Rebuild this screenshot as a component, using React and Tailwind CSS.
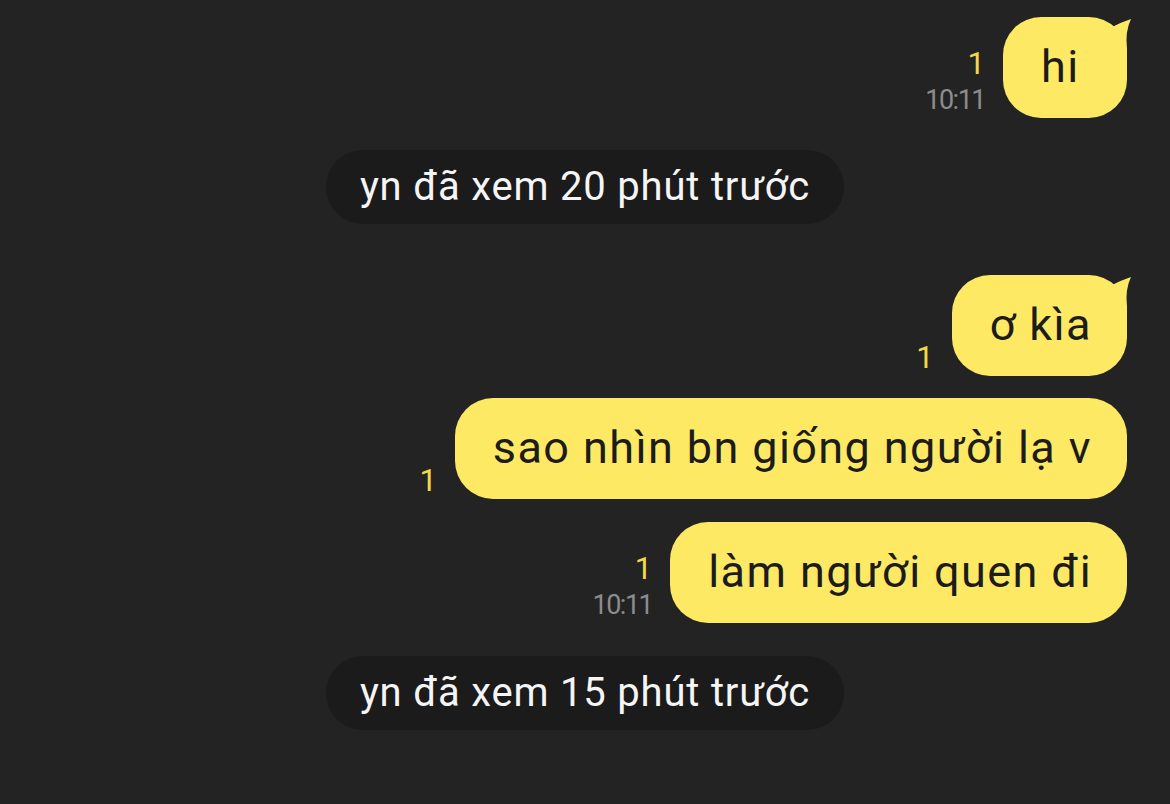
import React from 'react';

const messages = [
  { type: 'me', text: 'hi', tail: true, time: '10:11', mt: 'mt-[17px]' },
  { type: 'seen', text: 'yn đã xem 20 phút trước', mt: 'mt-[32px]' },
  { type: 'me', text: 'ơ kìa', tail: true, mt: 'mt-[51px]' },
  { type: 'me', text: 'sao nhìn bn giống người lạ v', mt: 'mt-[22px]' },
  { type: 'me', text: 'làm người quen đi', time: '10:11', mt: 'mt-[23px]' },
  { type: 'seen', text: 'yn đã xem 15 phút trước', mt: 'mt-[33px]' },
];

const Tail = () => (
  <svg
    className="absolute top-0 right-[-5px] w-[44px] h-[44px] text-[#fde964]"
    viewBox="0 0 44 44"
    fill="currentColor"
  >
    <path d="M24 10 Q34 5 43 2 Q37 14 39 32 L39 44 L24 44 Z" />
  </svg>
);

const MyBubble = ({ text, tail, time, mt }) => (
  <div className={`flex justify-end items-end pr-[43px] ${mt}`}>
    <div className="flex flex-col items-end mr-[18px] leading-[36px]">
      <span className="text-[#f3d84a] text-[31px]">1</span>
      {time && <span className="text-[#8c8c8c] text-[27px] tracking-[-1.5px]">{time}</span>}
    </div>
    <div className="relative">
      <div className="h-[101px] min-w-[124px] flex items-center pl-[38px] pr-[35px] pb-[2px] rounded-[38px] bg-[#fde964] text-[#1c1c1c] text-[45px] tracking-[1.4px] whitespace-nowrap">
        {text}
      </div>
      {tail && <Tail />}
    </div>
  </div>
);

const SeenPill = ({ text, mt }) => (
  <div className={`flex justify-center ${mt}`}>
    <div className="h-[74px] flex items-center px-[34px] rounded-full bg-[#1b1b1b] text-[#f5f5f5] text-[40px] tracking-[0.8px] whitespace-nowrap">
      {text}
    </div>
  </div>
);

export default function App() {
  return (
    <div
      className="w-full min-h-[804px] bg-[#232323] overflow-hidden"
      style={{ fontFamily: 'Roboto, "Noto Sans", sans-serif' }}
    >
      {messages.map((m, i) =>
        m.type === 'me' ? (
          <MyBubble key={i} {...m} />
        ) : (
          <SeenPill key={i} {...m} />
        )
      )}
    </div>
  );
}
